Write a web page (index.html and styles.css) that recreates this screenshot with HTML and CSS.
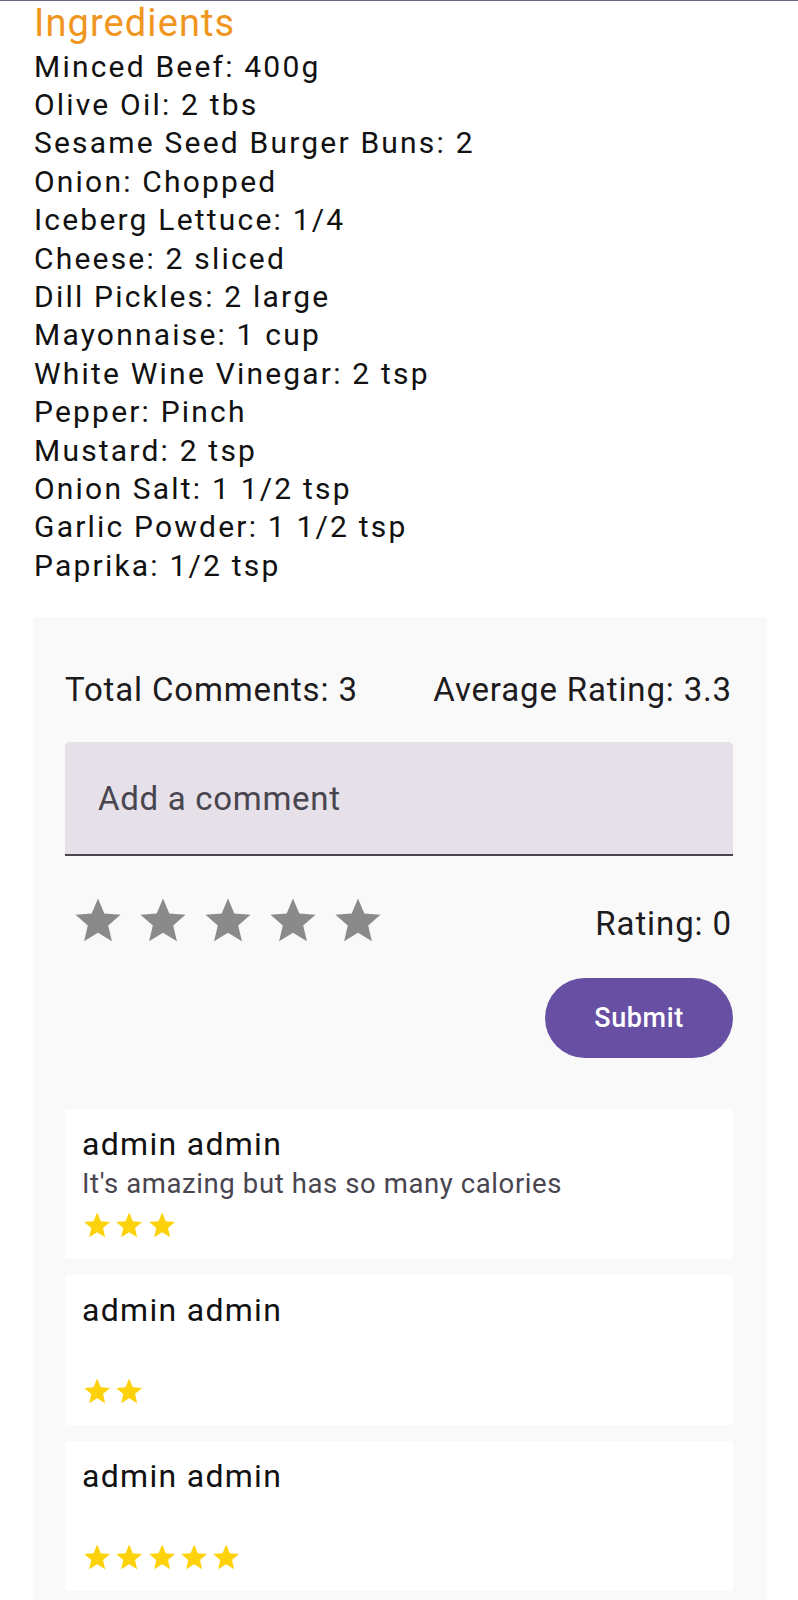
FILE: index.html
```html
<!DOCTYPE html>
<html lang="en">
<head>
<meta charset="utf-8">
<title>Recipe</title>
<link rel="stylesheet" href="styles.css">
</head>
<body>
<div class="page">
  <section class="ingredients">
    <h2 class="ing-title">Ingredients</h2>
    <ul class="ing-list">
      <li>Minced Beef: 400g</li>
      <li>Olive Oil: 2 tbs</li>
      <li>Sesame Seed Burger Buns: 2</li>
      <li>Onion: Chopped</li>
      <li>Iceberg Lettuce: 1/4</li>
      <li>Cheese: 2 sliced</li>
      <li>Dill Pickles: 2 large</li>
      <li>Mayonnaise: 1 cup</li>
      <li>White Wine Vinegar: 2 tsp</li>
      <li>Pepper: Pinch</li>
      <li>Mustard: 2 tsp</li>
      <li>Onion Salt: 1 1/2 tsp</li>
      <li>Garlic Powder: 1 1/2 tsp</li>
      <li>Paprika: 1/2 tsp</li>
    </ul>
  </section>

  <section class="panel">
    <div class="stats">
      <span>Total Comments: 3</span>
      <span>Average Rating: 3.3</span>
    </div>

    <div class="field"><span class="placeholder">Add a comment</span></div>

    <div class="rate-row">
      <div class="rate-stars">
        <span class="rate-star"><svg viewBox="0 0 24 24"><path d="M12 17.27L18.18 21l-1.64-7.03L22 9.24l-7.19-.61L12 2 9.19 8.63 2 9.24l5.46 4.73L5.82 21z"/></svg></span>
        <span class="rate-star"><svg viewBox="0 0 24 24"><path d="M12 17.27L18.18 21l-1.64-7.03L22 9.24l-7.19-.61L12 2 9.19 8.63 2 9.24l5.46 4.73L5.82 21z"/></svg></span>
        <span class="rate-star"><svg viewBox="0 0 24 24"><path d="M12 17.27L18.18 21l-1.64-7.03L22 9.24l-7.19-.61L12 2 9.19 8.63 2 9.24l5.46 4.73L5.82 21z"/></svg></span>
        <span class="rate-star"><svg viewBox="0 0 24 24"><path d="M12 17.27L18.18 21l-1.64-7.03L22 9.24l-7.19-.61L12 2 9.19 8.63 2 9.24l5.46 4.73L5.82 21z"/></svg></span>
        <span class="rate-star"><svg viewBox="0 0 24 24"><path d="M12 17.27L18.18 21l-1.64-7.03L22 9.24l-7.19-.61L12 2 9.19 8.63 2 9.24l5.46 4.73L5.82 21z"/></svg></span>
      </div>
      <span class="rating">Rating: 0</span>
    </div>

    <div class="submit-row">
      <button class="submit" type="button">Submit</button>
    </div>

    <div class="cards">
      <article class="card">
        <div class="card-name">admin admin</div>
        <div class="card-text">It's amazing but has so many calories</div>
        <div class="card-stars">
          <svg viewBox="0 0 24 24"><path d="M12 17.27L18.18 21l-1.64-7.03L22 9.24l-7.19-.61L12 2 9.19 8.63 2 9.24l5.46 4.73L5.82 21z"/></svg>
          <svg viewBox="0 0 24 24"><path d="M12 17.27L18.18 21l-1.64-7.03L22 9.24l-7.19-.61L12 2 9.19 8.63 2 9.24l5.46 4.73L5.82 21z"/></svg>
          <svg viewBox="0 0 24 24"><path d="M12 17.27L18.18 21l-1.64-7.03L22 9.24l-7.19-.61L12 2 9.19 8.63 2 9.24l5.46 4.73L5.82 21z"/></svg>
        </div>
      </article>
      <article class="card">
        <div class="card-name">admin admin</div>
        <div class="card-text"></div>
        <div class="card-stars">
          <svg viewBox="0 0 24 24"><path d="M12 17.27L18.18 21l-1.64-7.03L22 9.24l-7.19-.61L12 2 9.19 8.63 2 9.24l5.46 4.73L5.82 21z"/></svg>
          <svg viewBox="0 0 24 24"><path d="M12 17.27L18.18 21l-1.64-7.03L22 9.24l-7.19-.61L12 2 9.19 8.63 2 9.24l5.46 4.73L5.82 21z"/></svg>
        </div>
      </article>
      <article class="card">
        <div class="card-name">admin admin</div>
        <div class="card-text"></div>
        <div class="card-stars">
          <svg viewBox="0 0 24 24"><path d="M12 17.27L18.18 21l-1.64-7.03L22 9.24l-7.19-.61L12 2 9.19 8.63 2 9.24l5.46 4.73L5.82 21z"/></svg>
          <svg viewBox="0 0 24 24"><path d="M12 17.27L18.18 21l-1.64-7.03L22 9.24l-7.19-.61L12 2 9.19 8.63 2 9.24l5.46 4.73L5.82 21z"/></svg>
          <svg viewBox="0 0 24 24"><path d="M12 17.27L18.18 21l-1.64-7.03L22 9.24l-7.19-.61L12 2 9.19 8.63 2 9.24l5.46 4.73L5.82 21z"/></svg>
          <svg viewBox="0 0 24 24"><path d="M12 17.27L18.18 21l-1.64-7.03L22 9.24l-7.19-.61L12 2 9.19 8.63 2 9.24l5.46 4.73L5.82 21z"/></svg>
          <svg viewBox="0 0 24 24"><path d="M12 17.27L18.18 21l-1.64-7.03L22 9.24l-7.19-.61L12 2 9.19 8.63 2 9.24l5.46 4.73L5.82 21z"/></svg>
        </div>
      </article>
    </div>
  </section>
</div>
</body>
</html>
```

FILE: styles.css
```css
html, body {
  margin: 0;
  padding: 0;
  background: #ffffff;
}

body {
  font-family: Roboto, "Noto Sans", "Liberation Sans", sans-serif;
  color: #1b1b1f;
}

.page {
  border-top: 1px solid #6d6880;
  height: 1599px;
  overflow: hidden;
}

.ingredients {
  padding-left: 34px;
}

.ing-title {
  margin: 0;
  font-size: 38px;
  line-height: 44px;
  font-weight: 400;
  color: #f0961e;
  letter-spacing: 1.1px;
}

.ing-list {
  list-style: none;
  margin: 2.5px 0 0;
  padding: 0;
  font-size: 30px;
  line-height: 38.4px;
  letter-spacing: 2.2px;
  color: #111111;
}

.panel {
  margin: 32px 0 0 33px;
  width: 734px;
  box-sizing: border-box;
  padding: 53px 34px 40px 32px;
  background: #f9f9f9;
}

.stats {
  display: flex;
  justify-content: space-between;
  font-size: 33px;
  line-height: 39px;
  letter-spacing: 0.85px;
  color: #1d1b20;
  padding-right: 1px;
}

.field {
  margin-top: 33px;
  height: 114px;
  box-sizing: border-box;
  border-bottom: 2px solid #49454f;
  border-radius: 5px 5px 0 0;
  background: #e6e0e9;
  padding-left: 33px;
  display: flex;
  align-items: center;
}

.placeholder {
  font-size: 33px;
  letter-spacing: 0.7px;
  color: #49454f;
}

.rate-row {
  margin-top: 32px;
  height: 65px;
  display: flex;
  align-items: center;
  justify-content: space-between;
}

.rate-stars {
  display: flex;
}

.rate-star {
  width: 65px;
  height: 65px;
  display: flex;
  align-items: center;
  justify-content: center;
}

.rate-star svg {
  width: 54px;
  height: 54px;
  fill: #8a8a8a;
}

.rating {
  font-size: 33px;
  letter-spacing: 0.9px;
  color: #1d1b20;
  padding: 6px 1px 0 0;
}

.submit-row {
  margin-top: 25px;
  display: flex;
  justify-content: flex-end;
}

.submit {
  width: 188px;
  height: 80px;
  border: none;
  border-radius: 40px;
  background: #6750a4;
  color: #ffffff;
  font-family: Roboto, "Noto Sans", sans-serif;
  font-size: 27px;
  font-weight: 500;
  letter-spacing: 0.6px;
  padding: 0;
}

.cards {
  margin-top: 50.5px;
  display: flex;
  flex-direction: column;
  gap: 16px;
}

.card {
  height: 150px;
  box-sizing: border-box;
  background: #ffffff;
  border-radius: 3px;
  padding: 15.5px 17px 0;
}

.card-name {
  font-size: 32px;
  line-height: 40px;
  color: #111111;
  letter-spacing: 1.3px;
}

.card-text {
  margin-top: 1px;
  height: 38px;
  font-size: 27.5px;
  line-height: 38px;
  letter-spacing: 0.6px;
  color: #49454f;
}

.card-stars {
  margin-top: 7px;
  display: flex;
  margin-left: -1px;
}

.card-stars svg {
  width: 32.3px;
  height: 31px;
  fill: #fdd20a;
}
```
